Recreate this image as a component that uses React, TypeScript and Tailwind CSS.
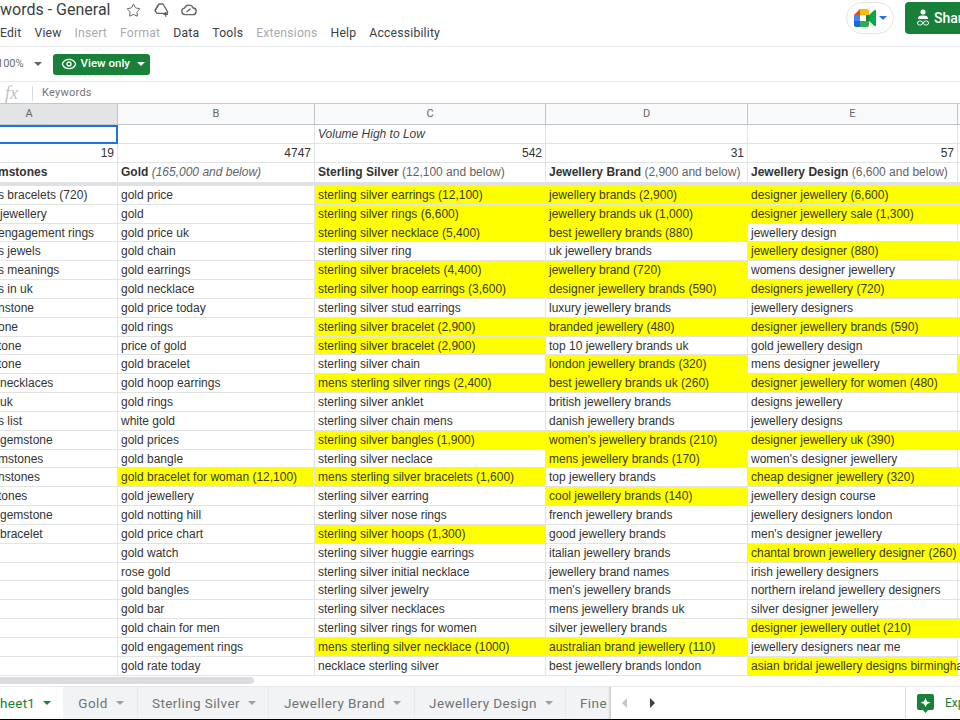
import { Star, Eye } from "lucide-react";

const rows: [string, string, boolean, string, boolean, string, boolean][] = [
  ["gold price", "sterling silver earrings (12,100)", true, "jewellery brands (2,900)", true, "designer jewellery (6,600)", true],
  ["gold", "sterling silver rings (6,600)", true, "jewellery brands uk (1,000)", true, "designer jewellery sale (1,300)", true],
  ["gold price uk", "sterling silver necklace (5,400)", true, "best jewellery brands (880)", true, "jewellery design", false],
  ["gold chain", "sterling silver ring", false, "uk jewellery brands", false, "jewellery designer (880)", true],
  ["gold earrings", "sterling silver bracelets (4,400)", true, "jewellery brand (720)", true, "womens designer jewellery", false],
  ["gold necklace", "sterling silver hoop earrings (3,600)", true, "designer jewellery brands (590)", true, "designers jewellery (720)", true],
  ["gold price today", "sterling silver stud earrings", false, "luxury jewellery brands", false, "jewellery designers", false],
  ["gold rings", "sterling silver bracelet (2,900)", true, "branded jewellery (480)", true, "designer jewellery brands (590)", true],
  ["price of gold", "sterling silver bracelet (2,900)", true, "top 10 jewellery brands uk", false, "gold jewellery design", false],
  ["gold bracelet", "sterling silver chain", false, "london jewellery brands (320)", true, "mens designer jewellery", false],
  ["gold hoop earrings", "mens sterling silver rings (2,400)", true, "best jewellery brands uk (260)", true, "designer jewellery for women (480)", true],
  ["gold rings", "sterling silver anklet", false, "british jewellery brands", false, "designs jewellery", false],
  ["white gold", "sterling silver chain mens", false, "danish jewellery brands", false, "jewellery designs", false],
  ["gold prices", "sterling silver bangles (1,900)", true, "women's jewellery brands (210)", true, "designer jewellery uk (390)", true],
  ["gold bangle", "sterling silver neclace", false, "mens jewellery brands (170)", true, "women's designer jewellery", false],
  ["gold bracelet for woman (12,100)", "mens sterling silver bracelets (1,600)", true, "top jewellery brands", false, "cheap designer jewellery (320)", true],
  ["gold jewellery", "sterling silver earring", false, "cool jewellery brands (140)", true, "jewellery design course", false],
  ["gold notting hill", "sterling silver nose rings", false, "french jewellery brands", false, "jewellery designers london", false],
  ["gold price chart", "sterling silver hoops (1,300)", true, "good jewellery brands", false, "men's designer jewellery", false],
  ["gold watch", "sterling silver huggie earrings", false, "italian jewellery brands", false, "chantal brown jewellery designer (260)", true],
  ["rose gold", "sterling silver initial necklace", false, "jewellery brand names", false, "irish jewellery designers", false],
  ["gold bangles", "sterling silver jewelry", false, "men's jewellery brands", false, "northern ireland jewellery designers", false],
  ["gold bar", "sterling silver necklaces", false, "mens jewellery brands uk", false, "silver designer jewellery", false],
  ["gold chain for men", "sterling silver rings for women", false, "silver jewellery brands", false, "designer jewellery outlet (210)", true],
  ["gold engagement rings", "mens sterling silver necklace (1000)", true, "australian brand jewellery (110)", true, "jewellery designers near me", false],
  ["gold rate today", "necklace sterling silver", false, "best jewellery brands london", false, "asian bridal jewellery designs birmingham", true],
];

const colA = [
  "s bracelets (720)", " jewellery", "engagement rings", "s jewels", "s meanings", "s in uk",
  "nstone", "one", "tone", "tone", " necklaces", " uk", "s list", " gemstone",
  "mstones", "nstones", "tones", " gemstone", " bracelet",
];

function Cell({ text, hl, w, over }: { text: string; hl?: boolean; w: string; over?: boolean }) {
  return (
    <div className={`${w} shrink-0 h-full border-r border-b border-[#e2e3e3] pl-[3px] leading-[19px] text-[12px] whitespace-nowrap ${over ? "relative z-10" : "overflow-hidden"} ${hl ? "bg-[#ffff00] text-[#3a3a1c]" : "bg-white text-[#333333]"}`}>
      {text}
    </div>
  );
}

function HeadCell({ c, w, active }: { c: string; w: string; active?: boolean }) {
  return (
    <div className={`${w} shrink-0 h-full flex items-center justify-center border-r border-[#c4c7c7] text-[11px] text-[#666] ${active ? "bg-[#e3e4e6] pr-[59px]" : "bg-[#f8f9fa]"}`}>
      {c}
    </div>
  );
}

function Caret({ color = "border-t-[#5f6368]" }: { color?: string }) {
  return <span className={`w-0 h-0 border-x-[4px] border-x-transparent border-t-[4px] ${color}`} />;
}

function Tab({ label, w }: { label: string; w: string }) {
  return (
    <div className={`${w} shrink-0 h-full flex items-center justify-center gap-[8px] pl-[2px] border-r border-[#e8eaed] text-[13.5px] tracking-[0.4px] text-[#6f7377]`}>
      <span>{label}</span>
      <Caret color="border-t-[#9aa0a6]" />
    </div>
  );
}

export default function App() {
  return (
    <div className="w-[960px] h-[720px] overflow-hidden bg-white flex flex-col" style={{ fontFamily: "Roboto, 'Liberation Sans', sans-serif" }}>
      {/* title bar */}
      <div className="h-[47px] shrink-0 flex overflow-hidden border-b border-[#e8eaed]">
        <div className="flex-1 min-w-0">
          <div className="h-[20px] flex items-center">
            <span className="text-[16px] text-[#3c4043] whitespace-nowrap w-[126px] shrink-0">words - General</span>
            <Star className="text-[#5f6368]" size={15} strokeWidth={1.6} />
            <svg className="ml-[12px]" width="16" height="16" viewBox="0 0 24 24" fill="none" stroke="#5f6368" strokeWidth="2" strokeLinejoin="round">
              <path d="M9 3h6l7 12-1 2H6l-3-4z" />
              <path d="M9 3 3 13" />
              <path d="M19 15v7M15.500 18.500h7" />
            </svg>
            <svg className="ml-[11px]" width="17" height="16" viewBox="0 0 24 24" fill="none" stroke="#5f6368" strokeWidth="2">
              <path d="M7 19a5 5 0 0 1-1-9.900A7 7 0 0 1 19 9a5 5 0 0 1-1 10z" />
              <path d="m9 15 6-5" />
            </svg>
          </div>
          <div className="flex items-center gap-[13px] text-[12.2px] text-[#3c4043] tracking-[0.2px] mt-[4px] h-[18px] whitespace-nowrap">
            <span>Edit</span>
            <span>View</span>
            <span className="text-[#a9abae]">Insert</span>
            <span className="text-[#a9abae]">Format</span>
            <span>Data</span>
            <span>Tools</span>
            <span className="text-[#a9abae]">Extensions</span>
            <span>Help</span>
            <span>Accessibility</span>
          </div>
        </div>
        <div className="w-[48px] h-[32px] mt-[2px] mr-[11px] rounded-full border border-[#e3e4e6] flex items-center justify-center gap-[3px] shrink-0">
          <svg width="22" height="18" viewBox="0 0 22 18">
            <path d="M0 6 6 0v6z" fill="#ea4335" />
            <path d="M6 0h7a2 2 0 0 1 2 2v4H6z" fill="#fbbc04" />
            <path d="M0 6h6v6H0z" fill="#4285f4" />
            <path d="M0 12h6v6H2a2 2 0 0 1-2-2z" fill="#1967d2" />
            <path d="M6 12h9v4a2 2 0 0 1-2 2H6z" fill="#34a853" />
            <path d="M12 6h3v6h-3z" fill="#188038" />
            <path d="M15 6l5.500-5a1 1 0 0 1 1.500 1v14a1 1 0 0 1-1.500 1L15 12z" fill="#00ac47" />
            <path d="M6 6h6v6H6z" fill="#fff" />
          </svg>
          <Caret color="border-t-[#1a73e8]" />
        </div>
        <div className="w-[55px] h-[32px] mt-[2px] bg-[#188038] rounded-l-[4px] text-white flex items-center pl-[12px] gap-[5px] overflow-hidden shrink-0">
          <svg className="shrink-0" width="12" height="18" viewBox="0 0 12 18" fill="#fff">
            <circle cx="6" cy="3" r="2.500" />
            <path d="M1 10c0-3 2-3.500 5-3.500s5 .5 5 3.500z" />
            <rect x="0.500" y="12" width="5" height="4" rx="2" fill="none" stroke="#fff" />
            <rect x="6.500" y="12" width="5" height="4" rx="2" fill="none" stroke="#fff" />
          </svg>
          <span className="text-[14px] font-medium">Share</span>
        </div>
      </div>

      {/* toolbar */}
      <div className="h-[35px] shrink-0 flex items-center border-b border-[#e8eaed] text-[11px] text-[#6b7074]">
        <span className="ml-[-3px]">100%</span>
        <span className="ml-[10px] flex"><Caret /></span>
        <div className="ml-[11px] w-[97px] h-[21px] bg-[#188038] rounded-[3px] flex items-center pl-[8px] text-white">
          <Eye size={16} strokeWidth={2} />
          <span className="ml-[4px] text-[11.5px] font-medium">View only</span>
          <span className="ml-[7px] flex"><Caret color="border-t-white" /></span>
        </div>
      </div>

      {/* formula bar */}
      <div className="h-[21px] shrink-0 flex items-center bg-white pt-[1px]">
        <span className="ml-[5px] text-[18px] italic text-[#c0c2c4] w-[27px]" style={{ fontFamily: "'Liberation Serif', serif" }}>fx</span>
        <div className="w-px h-[15px] bg-[#dadce0]" />
        <span className="ml-[9px] text-[11px] text-[#70757a] tracking-[0.25px]">Keywords</span>
      </div>

      {/* column headers */}
      <div className="h-[22px] shrink-0 flex border-y border-[#c4c7c7]">
        <HeadCell c="A" w="w-[118px]" active />
        <HeadCell c="B" w="w-[197px]" />
        <HeadCell c="C" w="w-[231px]" />
        <HeadCell c="D" w="w-[202px]" />
        <HeadCell c="E" w="w-[210px]" />
        <HeadCell c="" w="w-[40px]" />
      </div>

      <div style={{ fontFamily: "'Liberation Sans', Arial, sans-serif" }} className="flex flex-col flex-1 min-h-0">
        {/* top rows */}
        <div className="flex h-[19px] shrink-0 text-[12px] text-[#3c4043]">
          <div className="w-[118px] h-[19px] shrink-0 border-2 border-l-0 border-[#1a73e8]" />
          <div className="w-[197px] h-[19px] shrink-0 border-r border-b border-[#e2e3e3]" />
          <div className="w-[231px] h-[19px] shrink-0 border-r border-b border-[#e2e3e3] pl-[3px] italic leading-[19px]">Volume High to Low</div>
          <div className="w-[202px] h-[19px] shrink-0 border-r border-b border-[#e2e3e3]" />
          <div className="w-[210px] h-[19px] shrink-0 border-r border-b border-[#e2e3e3]" />
          <div className="w-[40px] h-[19px] shrink-0 border-b border-[#e2e3e3]" />
        </div>
        <div className="flex h-[19px] shrink-0 text-[12px] text-[#333333] leading-[18px]">
          {[["w-[118px]", "19"], ["w-[197px]", "4747"], ["w-[231px]", "542"], ["w-[202px]", "31"], ["w-[210px]", "57"], ["w-[40px]", ""]].map(([w, t], i) => (
            <div key={i} className={`${w} shrink-0 h-[19px] border-r border-b border-[#e2e3e3] text-right pr-[3px]`}>{t}</div>
          ))}
        </div>
        <div className="flex h-[19px] shrink-0 text-[12px] text-[#333333] leading-[18px] whitespace-nowrap">
          <div className="w-[118px] shrink-0 border-r border-[#e2e3e3] font-bold overflow-hidden"><span className="ml-[-2px]">mstones</span></div>
          <div className="w-[197px] shrink-0 border-r border-[#e2e3e3] pl-[3px]"><b>Gold</b> <i className="text-[#5f6368]">(165,000 and below)</i></div>
          <div className="w-[231px] shrink-0 border-r border-[#e2e3e3] pl-[3px]"><b>Sterling Silver</b> <span className="text-[#5f6368]">(12,100 and below)</span></div>
          <div className="w-[202px] shrink-0 border-r border-[#e2e3e3] pl-[3px]"><b>Jewellery Brand</b> <span className="text-[#5f6368]">(2,900 and below)</span></div>
          <div className="w-[210px] shrink-0 border-r border-[#e2e3e3] pl-[3px]"><b>Jewellery Design</b> <span className="text-[#5f6368]">(6,600 and below)</span></div>
        </div>
        <div className="h-[4px] shrink-0 bg-[#dfe1e3]" />

        {/* data rows */}
        <div className="shrink-0 grid auto-rows-[18.84px] grid-cols-[118px_197px_231px_202px_210px_40px]">
          {rows.map((r, i) => {
            const a = colA[i] ?? "";
            const whole = a.startsWith(" ");
            return (
              <div key={i} className="contents">
                <div className="h-full border-r border-b border-[#e2e3e3] leading-[19px] text-[12px] whitespace-nowrap overflow-hidden text-[#333333]">
                  <span className={whole ? "" : "ml-[-2px]"}>{a.trim()}</span>
                </div>
                <Cell w="w-[197px]" text={r[0]} hl={i === 15} />
                <Cell w="w-[231px]" text={r[1]} hl={r[2]} />
                <Cell w="w-[202px]" text={r[3]} hl={r[4]} />
                <Cell w="w-[210px]" text={r[5]} hl={r[6]} over />
                <Cell w="w-[40px]" text="" hl={(r[6] && i < 25) || i === 9} />
              </div>
            );
          })}
        </div>

        {/* scrollbar */}
        <div className="h-[10px] shrink-0 pt-[1px] bg-white">
          <div className="w-[254px] h-[7px] bg-[#dadce0] rounded-r-full" />
        </div>
      </div>

      {/* tabs */}
      <div className="h-[33px] shrink-0 flex bg-[#f1f3f4] border-t border-[#e8eaed]">
        <div className="w-[63px] shrink-0 h-full bg-white flex items-center gap-[8px] text-[13.5px] text-[#188038] tracking-[0.3px] overflow-hidden">
          <span>heet1</span>
          <Caret color="border-t-[#188038]" />
        </div>
        <Tab label="Gold" w="w-[75px]" />
        <Tab label="Sterling Silver" w="w-[131px]" />
        <Tab label="Jewellery Brand" w="w-[146px]" />
        <Tab label="Jewellery Design" w="w-[151px]" />
        <div className="w-[45px] shrink-0 h-full pl-[14px] flex items-center text-[13.5px] text-[#6f7377] tracking-[0.4px] overflow-hidden shadow-[inset_-3px_0_3px_-2px_#bbb]">Fine</div>
        <div className="flex-1 bg-white flex items-center">
          <span className="ml-[11px] w-0 h-0 border-y-[5px] border-y-transparent border-r-[5px] border-r-[#c4c7c7]" />
          <span className="ml-[23px] w-0 h-0 border-y-[5px] border-y-transparent border-l-[5px] border-l-[#3c4043]" />
        </div>
        <div className="w-[55px] shrink-0 bg-white border-l border-[#dadce0] flex items-center pl-[11px] gap-[11px] overflow-hidden">
          <svg className="shrink-0" width="17" height="19" viewBox="0 0 17 19">
            <path d="M2 0h13a2 2 0 0 1 2 2v12a2 2 0 0 1-2 2h-4l-2.500 3L6 16H2a2 2 0 0 1-2-2V2a2 2 0 0 1 2-2z" fill="#188038" />
            <path d="m8.500 4 1.500 3.500 3.500 1-3.500 1.500-1.500 3-1.500-3-3.500-1.500 3.500-1z" fill="#fff" />
          </svg>
          <span className="text-[12px] text-[#188038] whitespace-nowrap">Explore</span>
        </div>
      </div>
      <div className="h-[1px] shrink-0 bg-black" />
    </div>
  );
}
